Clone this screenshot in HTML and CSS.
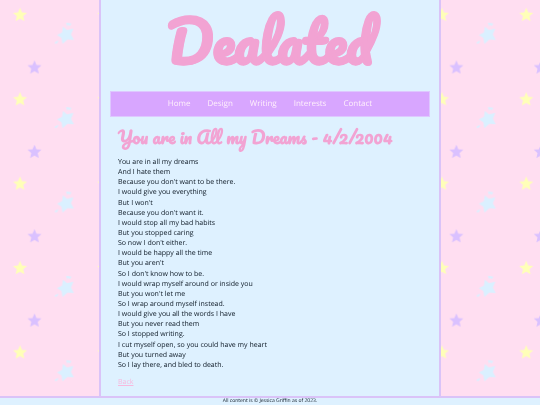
FILE: index.html
```html
<!DOCTYPE html>
<html lang="en">
<head>
<meta charset="utf-8">
<title>Dealated</title>
<link rel="stylesheet" href="styles.css">
</head>
<body>
<svg class="backdrop" aria-hidden="true">
  <defs>
    <path id="star" d="M0-7.2 L2-2.6 L7-2.2 L3.2 1.2 L4.4 6.2 L0 3.6 L-4.4 6.2 L-3.2 1.2 L-7-2.2 L-2-2.6Z"/>
    <pattern id="stars" width="84.375" height="84.375" patternUnits="userSpaceOnUse">
      <use href="#star" x="20" y="15" fill="#ffffb8"/>
      <use href="#star" x="34.500" y="67.500" fill="#dac1ff"/>
      <g fill="#daf0ff">
        <path d="M63 26.500 L67 30 L73.500 28.500 L71 34.500 L74 40 L67.500 39.500 L62.500 44 L61.500 38 L57 35 L62 32.500Z"/>
        <path d="M66 22.500 L71.500 23.500 L70 26 L68 24.500 L67.500 27Z"/>
        <path d="M55 42 L58.500 40.500 L57.500 43 L55 44Z"/>
      </g>
    </pattern>
  </defs>
  <rect width="100%" height="100%" fill="#ffdef1"/>
  <rect width="100%" height="100%" fill="url(#stars)"/>
</svg>
<div class="page">
  <header><h1 class="logo">Dealated</h1></header>
  <nav class="menu">
    <a href="#">Home</a>
    <a href="#">Design</a>
    <a href="#">Writing</a>
    <a href="#">Interests</a>
    <a href="#">Contact</a>
  </nav>
  <main class="content">
    <h2 class="title">You are in All my Dreams - 4/2/2004</h2>
    <p class="poem">You are in all my dreams<br>
And I hate them<br>
Because you don't want to be there.<br>
I would give you everything<br>
But I won't<br>
Because you don't want it.<br>
I would stop all my bad habits<br>
But you stopped caring<br>
So now I don't either.<br>
I would be happy all the time<br>
But you aren't<br>
So I don't know how to be.<br>
I would wrap myself around or inside you<br>
But you won't let me<br>
So I wrap around myself instead.<br>
I would give you all the words I have<br>
But you never read them<br>
So I stopped writing.<br>
I cut myself open, so you could have my heart<br>
But you turned away<br>
So I lay there, and bled to death.</p>
    <a class="back" href="#">Back</a>
  </main>
</div>
<footer class="footer">All content is © Jessica Griffin as of 2023.</footer>
</body>
</html>
```
FILE: styles.css
```css
* {
  box-sizing: border-box;
}

body {
  margin: 0;
  min-height: 100vh;
  display: flex;
  flex-direction: column;
  font-family: "Open Sans", "Noto Sans", sans-serif;
  font-size: 7px;
  line-height: 1.45;
  text-rendering: geometricPrecision;
  color: #0c1824;
}

.backdrop {
  position: fixed;
  inset: 0;
  z-index: -1;
  width: 100%;
  height: 100%;
}

.page {
  flex: 1;
  width: 100%;
  max-width: 342px;
  margin: 0 auto;
  padding: 0 9px;
  background: #def1ff;
  border: solid #dac3f8;
  border-width: 0 2px;
}

.logo,
.title {
  margin: 0;
  font-family: Pacifico, Lato, cursive;
  font-weight: bold;
  color: #f2a3d3;
}

.logo {
  padding-top: 4px;
  font-size: 55px;
  line-height: 74px;
  text-align: center;
  -webkit-text-stroke: 1px #f2a3d3;
}

.menu {
  display: flex;
  justify-content: center;
  gap: 17px;
  margin-top: 13px;
  border: 1px solid #dec8ff;
  background: #d8a6ff;
  font-size: 8px;
  line-height: 24px;
}

.menu a {
  color: #fff0fb;
  text-decoration: none;
}

.content {
  padding: 7px 8px;
}

.title {
  font-size: 17px;
  line-height: 26px;
}

.poem {
  margin: 8px 0 7px;
}

.back {
  color: #f7b9de;
}

.footer {
  border-top: 2px solid #dac3f8;
  background: #def1ff;
  font-size: 5px;
  line-height: 7px;
  text-align: center;
}
```
